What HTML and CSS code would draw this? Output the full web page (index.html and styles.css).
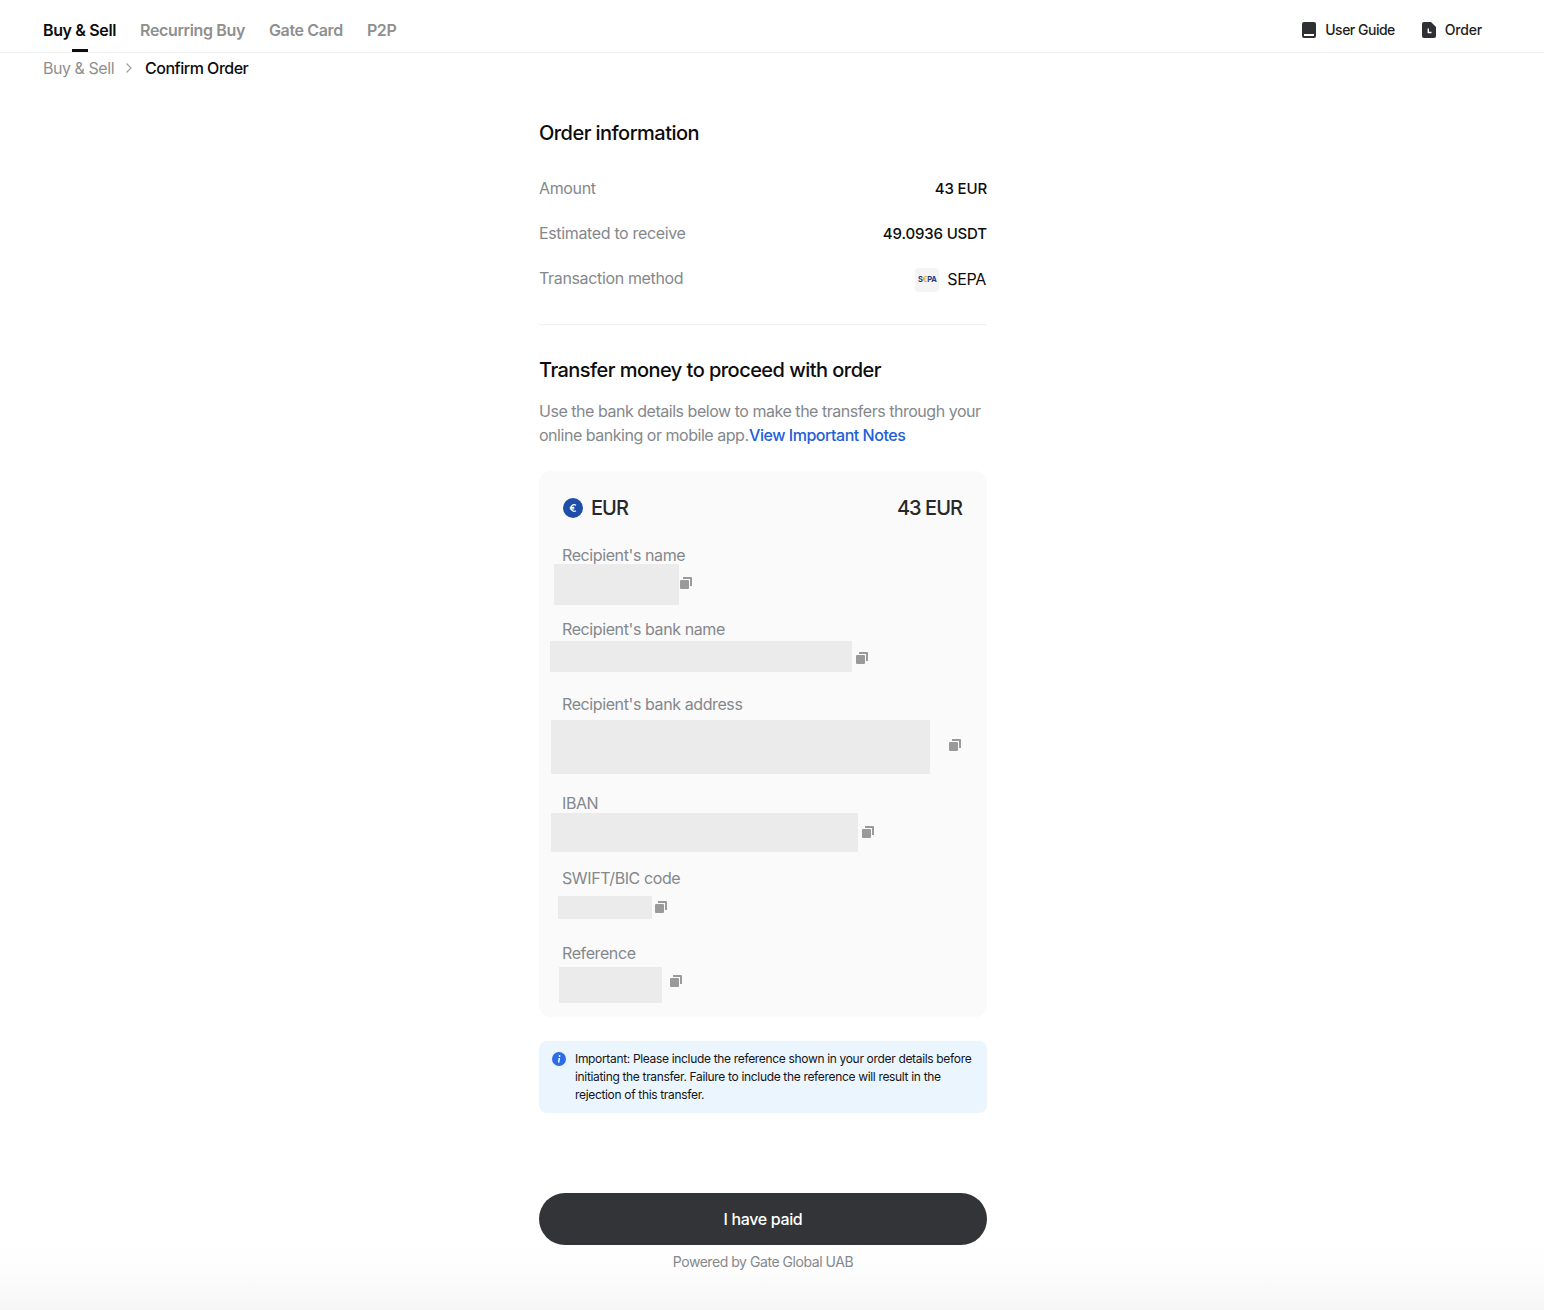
FILE: index.html
```html
<!DOCTYPE html>
<html lang="en">
<head>
    <meta charset="UTF-8">
    <meta name="viewport" content="width=device-width, initial-scale=1.0">
    <title>Confirm Order</title>
    <link rel="stylesheet" href="styles.css">
</head>
<body>
    <header class="topbar">
        <nav class="tabs">
            <a class="tab active">Buy &amp; Sell</a>
            <a class="tab">Recurring Buy</a>
            <a class="tab">Gate Card</a>
            <a class="tab">P2P</a>
        </nav>
        <div class="top-links">
            <a class="top-link guide-link">
                <svg width="14" height="16" viewBox="0 0 14 16"><path fill="#2f3033" fill-rule="evenodd" d="M2 0h10a2 2 0 0 1 2 2v12a2 2 0 0 1-2 2H2a2 2 0 0 1-2-2V2a2 2 0 0 1 2-2zM2 12v2h10v-2z"/></svg>
                User Guide
            </a>
            <a class="top-link">
                <svg width="14" height="16" viewBox="0 0 14 16"><path fill="#2f3033" d="M2 0h7l5 5v9a2 2 0 0 1-2 2H2a2 2 0 0 1-2-2V2a2 2 0 0 1 2-2z"/><path fill="none" stroke="#fff" stroke-width="1.400" d="M6.300 6.500v4h3.200"/></svg>
                Order
            </a>
        </div>
    </header>

    <div class="breadcrumb">
        <span class="crumb">Buy &amp; Sell</span>
        <svg class="crumb-arrow" width="8" height="12" viewBox="0 0 8 12"><path fill="none" stroke="#a0a0a0" stroke-width="1.200" d="M1.500 1.500 6 6l-4.500 4.500"/></svg>
        <span class="crumb-current">Confirm Order</span>
    </div>

    <main class="order">
        <h2 class="heading first">Order information</h2>
        <div class="info-row"><span class="info-label">Amount</span><span class="info-value">43 EUR</span></div>
        <div class="info-row"><span class="info-label">Estimated to receive</span><span class="info-value">49.0936 USDT</span></div>
        <div class="info-row"><span class="info-label">Transaction method</span>
            <span class="info-value method">
                <span class="sepa-logo"><b class="sepa-blue">S</b><b class="sepa-gold">€</b><b class="sepa-blue">PA</b></span>
                SEPA
            </span>
        </div>

        <hr class="divider">

        <h2 class="heading">Transfer money to proceed with order</h2>
        <p class="intro">Use the bank details below to make the transfers through your online banking or mobile app.<a class="notes-link">View Important Notes</a></p>

        <section class="bank-card">
            <div class="bank-head">
                <span class="currency">
                    <svg width="20" height="20" viewBox="0 0 20 20"><circle cx="10" cy="10" r="10" fill="#1f4ea8"/><path fill="none" stroke="#fff" stroke-width="1.200" d="M13 7.200a3.300 3.300 0 1 0 0 5.600M6.800 9.300h4.500M6.800 10.900h4.500"/></svg>
                    EUR
                </span>
                <span class="bank-total">43 EUR</span>
            </div>

            <div class="field f-name">
                <div class="field-label">Recipient's name</div>
                <div class="field-value"><span class="mask m-name"></span><svg class="copy" viewBox="0 0 12 12"><use href="#copy-icon"/></svg></div>
            </div>
            <div class="field f-bank">
                <div class="field-label">Recipient's bank name</div>
                <div class="field-value"><span class="mask m-bank"></span><svg class="copy" viewBox="0 0 12 12"><use href="#copy-icon"/></svg></div>
            </div>
            <div class="field f-address">
                <div class="field-label">Recipient's bank address</div>
                <div class="field-value"><span class="mask m-address"></span><svg class="copy" viewBox="0 0 12 12"><use href="#copy-icon"/></svg></div>
            </div>
            <div class="field f-iban">
                <div class="field-label">IBAN</div>
                <div class="field-value"><span class="mask m-iban"></span><svg class="copy" viewBox="0 0 12 12"><use href="#copy-icon"/></svg></div>
            </div>
            <div class="field f-swift">
                <div class="field-label">SWIFT/BIC code</div>
                <div class="field-value"><span class="mask m-swift"></span><svg class="copy" viewBox="0 0 12 12"><use href="#copy-icon"/></svg></div>
            </div>
            <div class="field f-ref">
                <div class="field-label">Reference</div>
                <div class="field-value"><span class="mask m-ref"></span><svg class="copy" viewBox="0 0 12 12"><use href="#copy-icon"/></svg></div>
            </div>
        </section>

        <div class="notice">
            <svg class="notice-icon" width="14" height="14" viewBox="0 0 14 14"><circle cx="7" cy="7" r="7" fill="#2f6be6"/><path fill="none" stroke="#fff" stroke-width="1.500" d="M7.300 6 6.700 10.500"/><circle cx="7.600" cy="4" r="0.900" fill="#fff"/></svg>
            <p>Important: Please include the reference shown in your order details before initiating the transfer. Failure to include the reference will result in the rejection of this transfer.</p>
        </div>

        <button class="paid-btn">I have paid</button>
        <div class="powered">Powered by Gate Global UAB</div>
    </main>

    <svg class="sprite" width="0" height="0">
        <symbol id="copy-icon" viewBox="0 0 12 12">
            <rect x="0" y="3" width="9" height="9" rx="1" fill="#9a9a9a"/>
            <path fill="#9a9a9a" d="M3 0h8a1 1 0 0 1 1 1v8h-2V2H3z"/>
        </symbol>
    </svg>
</body>
</html>
```

FILE: styles.css
```css
* {
    box-sizing: border-box;
}

html,
body {
    margin: 0;
    height: 1310px;
    overflow: hidden;
}

body {
    font-family: Inter, 'Liberation Sans', sans-serif;
    color: #0c0c0e;
    background: linear-gradient(to bottom, #ffffff 0, #ffffff 1240px, #fdfdfd 1270px, #f6f6f6 1310px);
}

.topbar {
    height: 53px;
    padding: 0 62px 0 43px;
    display: flex;
    justify-content: space-between;
    border-bottom: 1px solid #f1f1f1;
}

.tabs {
    display: flex;
    gap: 24px;
}

.tab {
    position: relative;
    padding-top: 21px;
    font-size: 16px;
    line-height: 19px;
    font-weight: 600;
    letter-spacing: -0.36px;
    color: #8f8f8f;
}

.tab.active {
    color: #0c0c0e;
}

.tab.active::after {
    content: "";
    position: absolute;
    left: 50%;
    bottom: 0;
    width: 16px;
    height: 3px;
    margin-left: -8px;
    background: #0c0c0e;
}

.top-links {
    display: flex;
    gap: 27px;
    padding-top: 21px;
}

.top-link {
    display: flex;
    align-items: flex-start;
    gap: 9px;
    font-size: 14px;
    line-height: 18px;
    font-weight: 500;
    letter-spacing: -0.2px;
    color: #1e1e20;
}

.guide-link {
    letter-spacing: -0.5px;
}

.top-link svg {
    margin-top: 1px;
}

.breadcrumb {
    height: 30px;
    padding: 5px 0 0 43px;
    display: flex;
    align-items: flex-start;
    font-size: 16px;
    line-height: 20px;
}

.crumb {
    color: #8f8f8f;
    letter-spacing: -0.45px;
}

.crumb-arrow {
    margin: 4px 12px 0 11px;
}

.crumb-current {
    font-weight: 500;
    letter-spacing: -0.5px;
}

.order {
    width: 448px;
    margin: 0 auto 0 539px;
}

.heading {
    margin: 0;
    font-size: 20px;
    line-height: 26px;
    font-weight: 500;
    letter-spacing: -0.54px;
}

.heading.first {
    margin-top: 37px;
    margin-bottom: 30px;
}

.info-row {
    height: 45px;
    display: flex;
    justify-content: space-between;
    font-size: 16px;
    line-height: 24px;
}

.info-label {
    color: #84888c;
    letter-spacing: -0.35px;
}

.info-value {
    padding-top: 1px;
    font-size: 15px;
    font-weight: 500;
    letter-spacing: -0.15px;
}

.method {
    display: flex;
    align-items: center;
    gap: 8px;
    height: 26px;
    margin-right: 1px;
    padding-top: 0;
    font-size: 16px;
    font-weight: 400;
    letter-spacing: -0.3px;
}

.sepa-logo {
    width: 24px;
    height: 24px;
    margin-top: 2px;
    border-radius: 4px;
    background: #f4f4f4;
    display: flex;
    align-items: center;
    justify-content: center;
    font-size: 7.500px;
    line-height: 24px;
    letter-spacing: -0.3px;
}

.sepa-blue {
    color: #1d3a87;
}

.sepa-gold {
    color: #e6ae1d;
}

.divider {
    margin: 13px 0 32px;
    border: 0;
    border-top: 1px solid #f1f1f1;
}

.intro {
    margin: 16px 0 24px;
    font-size: 16px;
    line-height: 24px;
    color: #84888c;
    letter-spacing: -0.47px;
}

.notes-link {
    margin-left: 0.500px;
    color: #2260d9;
    font-weight: 500;
    letter-spacing: -0.47px;
}

.bank-card {
    height: 546px;
    padding: 24px 24px 0;
    border-radius: 12px;
    background: #fafafa;
}

.bank-head {
    display: flex;
    justify-content: space-between;
    font-size: 20px;
    line-height: 26px;
    font-weight: 500;
    color: #26282b;
    letter-spacing: -0.95px;
}

.bank-total {
    margin-right: 1px;
}

.currency {
    display: flex;
    align-items: center;
    gap: 8px;
}

.field-label {
    font-size: 16px;
    line-height: 20px;
    color: #84888c;
    letter-spacing: -0.4px;
}

.field-value {
    display: flex;
    align-items: center;
}

.mask {
    display: block;
    background: #ebebeb;
}

.copy {
    width: 12px;
    height: 12px;
    flex: none;
}

.sprite {
    position: absolute;
}

.field {
    margin-left: -1px;
}

.f-name { margin-top: 24px; }
.f-bank { margin-top: 14px; }
.f-address { margin-top: 22px; }
.f-iban { margin-top: 19px; }
.f-swift { margin-top: 16px; }
.f-ref { margin-top: 24px; }

.m-name { width: 125px; height: 41px; margin: -1px 1px 0 -8px; }
.m-bank { width: 302px; height: 31px; margin: 2px 4px 0 -12px; }
.m-address { width: 379px; height: 54px; margin: 6px 19px 0 -11px; }
.m-iban { width: 307px; height: 39px; margin: 0 4px 0 -11px; }
.m-swift { width: 94px; height: 23px; margin: 8px 3px 0 -4px; }
.m-ref { width: 103px; height: 36px; margin: 4px 8px 0 -3px; }

.f-name .copy { margin-bottom: 5px; }
.f-bank .copy { margin-top: 4px; }
.f-address .copy { margin-top: 2px; }
.f-iban .copy { margin-bottom: 2px; }
.f-swift .copy { margin-top: 6px; }
.f-ref .copy { margin-bottom: 4px; }

.notice {
    margin-top: 24px;
    height: 72px;
    padding: 9px 14px 0 13px;
    display: flex;
    gap: 9px;
    border-radius: 8px;
    background: #ebf5fe;
}

.notice-icon {
    flex: none;
    margin-top: 2px;
}

.notice p {
    margin: 0;
    font-size: 12px;
    line-height: 18px;
    letter-spacing: -0.33px;
    color: #141416;
}

.paid-btn {
    display: block;
    width: 100%;
    height: 52px;
    margin-top: 80px;
    border: 0;
    border-radius: 26px;
    background: #323437;
    color: #fff;
    font-family: inherit;
    font-size: 16px;
    font-weight: 500;
    letter-spacing: -0.35px;
}

.powered {
    margin-top: 8px;
    font-size: 14px;
    line-height: 18px;
    text-align: center;
    color: #84888c;
    letter-spacing: -0.45px;
}
```
